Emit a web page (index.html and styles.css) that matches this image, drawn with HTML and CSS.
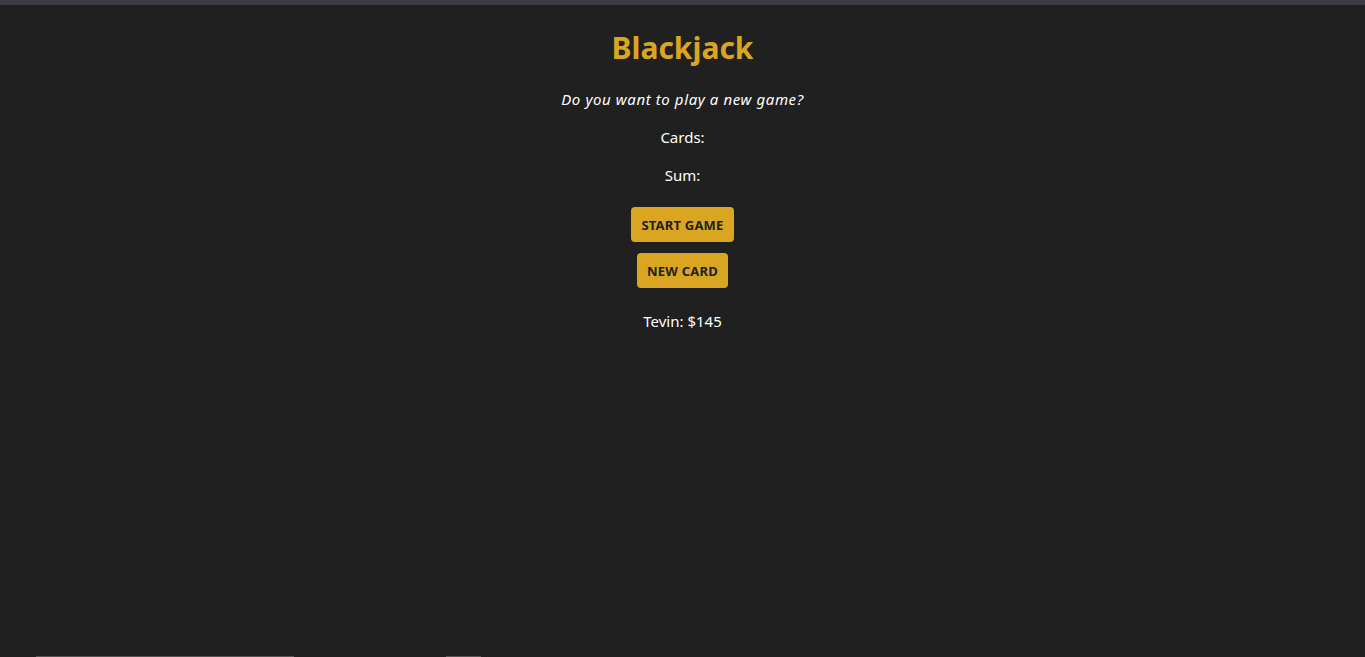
FILE: index.html
```html
<!DOCTYPE html>
<html>
<head>
<meta charset="utf-8">
<link rel="stylesheet" href="styles.css">
</head>
<body>
<div class="topbar"></div>
<main class="game">
  <h1 class="title">Blackjack</h1>
  <p class="message">Do you want to play a new game?</p>
  <p class="line">Cards:</p>
  <p class="line">Sum:</p>
  <div class="buttons">
    <button class="btn">START GAME</button>
    <button class="btn">NEW CARD</button>
  </div>
  <p class="line player">Tevin: $145</p>
</main>
<div class="bottom">
  <span class="scroll-a"></span>
  <span class="scroll-b"></span>
</div>
</body>
</html>
```
FILE: styles.css
```css
html, body {
  margin: 0;
  padding: 0;
  height: 100%;
  background: #202020;
  overflow: hidden;
}
body {
  font-family: "Noto Sans", "DejaVu Sans", sans-serif;
  color: #ffffff;
  display: flex;
  flex-direction: column;
}
.topbar {
  height: 5px;
  background: #3c3b41;
  flex: none;
}
.game {
  flex: 1;
  display: flex;
  flex-direction: column;
  align-items: center;
  text-align: center;
  padding-top: 24px;
}
.title {
  margin: 0;
  font-size: 30px;
  line-height: 37px;
  color: #daa520;
  font-weight: bold;
}
.message {
  margin: 22px 0 0;
  font-style: italic;
  font-size: 15px;
  letter-spacing: 0.6px;
  line-height: 22px;
}
.line {
  margin: 16px 0 0;
  font-size: 15px;
  line-height: 22px;
}
.buttons {
  margin-top: 21px;
  display: flex;
  flex-direction: column;
  align-items: center;
  gap: 11px;
}
.btn {
  font-family: inherit;
  background: #daa520;
  color: #202020;
  border: none;
  border-radius: 4px;
  height: 35px;
  padding: 0 10px;
  font-size: 13px;
  letter-spacing: 0.2px;
  font-weight: bold;
}
.player {
  margin-top: 22px;
}
.bottom {
  height: 1px;
  position: relative;
  flex: none;
}
.scroll-a, .scroll-b {
  position: absolute;
  top: 0;
  height: 1px;
  background: #555;
}
.scroll-a { left: 36px; width: 258px; }
.scroll-b { left: 446px; width: 35px; }
```
